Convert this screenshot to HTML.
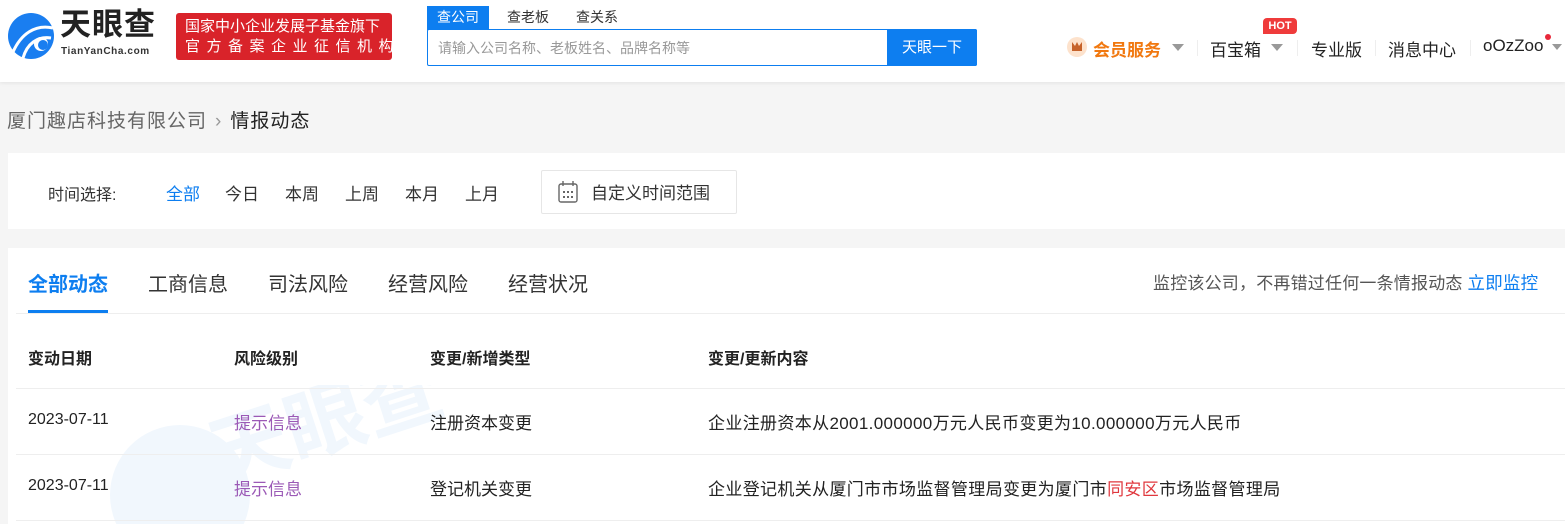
<!DOCTYPE html>
<html><head><meta charset="utf-8"><style>
*{margin:0;padding:0;box-sizing:border-box}
html,body{width:1565px;height:524px;overflow:hidden}
body{background:#f5f5f5;font-family:"Liberation Sans","Noto Sans CJK SC",sans-serif;color:#333;position:relative}
.a{position:absolute;white-space:nowrap}
</style></head><body>
<div class="a" style="left:0;top:0;width:1565px;height:82px;background:#fff;box-shadow:0 1px 4px rgba(0,0,0,.08)"></div>
<svg class="a" style="left:7px;top:12px" width="48" height="48" viewBox="0 0 48 48">
<circle cx="24" cy="24" r="23" fill="#1a7ef0"/>
<path d="M6 40 C14 22 28 12 46 16" stroke="#fff" stroke-width="3" fill="none"/>
<path d="M16 46 C20 32 30 24 44 26" stroke="#fff" stroke-width="3" fill="none"/>
<circle cx="34" cy="32" r="7" fill="#fff"/><circle cx="36" cy="33" r="5" fill="#1a7ef0"/>
</svg>
<div class="a" style="left:60px;top:5px;font-size:31px;line-height:40px;font-weight:bold;color:#222;letter-spacing:1px">天眼查</div>
<div class="a" style="left:61px;top:46px;font-size:10px;line-height:12px;color:#333;font-weight:bold;letter-spacing:0.6px">TianYanCha.com</div>
<div class="a" style="left:176px;top:13px;width:216px;height:47px;background:#d9232a;border-radius:3px;color:#fff;font-size:15px;line-height:20px;padding:4px 0 0 9px">国家中小企业发展子基金旗下<br><span style="letter-spacing:6.5px">官方备案企业征信机构</span></div>
<div class="a" style="left:427px;top:6px;width:62px;height:24px;background:#0d7ef0;color:#fff;font-size:14px;line-height:22px;text-align:center">查公司</div>
<div class="a" style="left:507px;top:7px;font-size:14px;color:#333">查老板</div>
<div class="a" style="left:576px;top:7px;font-size:14px;color:#333">查关系</div>
<div class="a" style="left:427px;top:29px;width:550px;height:37px;border:1px solid #0d7ef0;border-radius:2px;background:#fff"></div>
<div class="a" style="left:438px;top:38px;font-size:14px;color:#999">请输入公司名称、老板姓名、品牌名称等</div>
<div class="a" style="left:887px;top:29px;width:90px;height:37px;background:#0d7ef0;color:#fff;font-size:15px;line-height:37px;text-align:center;border-radius:0 2px 2px 0">天眼一下</div>
<div class="a" style="left:1067px;top:37px;width:20px;height:20px;border-radius:50%;background:#fde2cc"></div>
<div class="a" style="left:1072px;top:42px;width:10px;height:9px;background:#c6622a;clip-path:polygon(0 0,30% 45%,50% 0,70% 45%,100% 0,100% 100%,0 100%)"></div>
<div class="a" style="left:1093px;top:36px;font-size:17px;font-weight:bold;color:#f1780f">会员服务</div>
<div class="a" style="left:1172px;top:44px;border:6px solid transparent;border-top:7px solid #999;border-bottom:0"></div>
<div class="a" style="left:1210px;top:36px;font-size:17px;color:#222">百宝箱</div>
<div class="a" style="left:1271px;top:44px;border:6px solid transparent;border-top:7px solid #999;border-bottom:0"></div>
<div class="a" style="left:1263px;top:18px;width:34px;height:16px;background:#ef3b3b;color:#fff;font-size:11px;font-weight:bold;line-height:16px;text-align:center;border-radius:4px 4px 4px 0">HOT</div>
<div class="a" style="left:1311px;top:36px;font-size:17px;color:#222">专业版</div>
<div class="a" style="left:1388px;top:36px;font-size:17px;color:#222">消息中心</div>
<div class="a" style="left:1483px;top:36px;font-size:17px;color:#222">oOzZoo</div>
<div class="a" style="left:1545px;top:34px;width:6px;height:6px;border-radius:50%;background:#e8283a"></div>
<div class="a" style="left:1552px;top:44px;border:5px solid transparent;border-top:6px solid #999;border-bottom:0"></div>
<div class="a" style="left:1197px;top:40px;width:1px;height:16px;background:#eee"></div>
<div class="a" style="left:1297px;top:40px;width:1px;height:16px;background:#eee"></div>
<div class="a" style="left:1375px;top:40px;width:1px;height:16px;background:#eee"></div>
<div class="a" style="left:1470px;top:40px;width:1px;height:16px;background:#eee"></div>

<div class="a" style="left:7px;top:106px;font-size:19px;letter-spacing:1px;color:#666">厦门趣店科技有限公司<span style="color:#999;margin:0 8px">›</span><span style="color:#222">情报动态</span></div>

<div class="a" style="left:8px;top:153px;width:1557px;height:76px;background:#fff"></div>
<div class="a" style="left:48px;top:181px;font-size:16px;color:#333">时间选择:</div>
<div class="a" style="left:166px;top:180px;font-size:17px;color:#0d7ef0">全部</div>
<div class="a" style="left:225px;top:180px;font-size:17px;color:#333">今日</div>
<div class="a" style="left:285px;top:180px;font-size:17px;color:#333">本周</div>
<div class="a" style="left:345px;top:180px;font-size:17px;color:#333">上周</div>
<div class="a" style="left:405px;top:180px;font-size:17px;color:#333">本月</div>
<div class="a" style="left:465px;top:180px;font-size:17px;color:#333">上月</div>
<div class="a" style="left:541px;top:170px;width:196px;height:44px;border:1px solid #e6e6e6;border-radius:2px"></div>
<svg class="a" style="left:557px;top:180px" width="22" height="24" viewBox="0 0 22 24"><rect x="2" y="4" width="18" height="18" rx="2" fill="none" stroke="#666" stroke-width="1.4"/><path d="M6 1v5M16 1v5" stroke="#666" stroke-width="1.4"/><g fill="#666"><rect x="6" y="11" width="2" height="2"/><rect x="10" y="11" width="2" height="2"/><rect x="14" y="11" width="2" height="2"/><rect x="6" y="16" width="2" height="2"/><rect x="10" y="16" width="2" height="2"/><rect x="14" y="16" width="2" height="2"/></g></svg>
<div class="a" style="left:591px;top:179px;font-size:17px;color:#333">自定义时间范围</div>

<div class="a" style="left:8px;top:248px;width:1557px;height:276px;background:#fff"></div>
<svg class="a" style="left:110px;top:385px" width="380" height="139" viewBox="0 0 380 139"><circle cx="70" cy="110" r="70" fill="#f1f7fd"/><text x="110" y="100" font-size="80" font-weight="bold" fill="#f1f7fd" transform="rotate(-18 110 100)" font-family="Noto Sans CJK SC">天眼查</text></svg>
<div class="a" style="left:28px;top:268px;font-size:20px;font-weight:bold;color:#0d7ef0">全部动态</div>
<div class="a" style="left:148px;top:268px;font-size:20px;color:#333">工商信息</div>
<div class="a" style="left:268px;top:268px;font-size:20px;color:#333">司法风险</div>
<div class="a" style="left:388px;top:268px;font-size:20px;color:#333">经营风险</div>
<div class="a" style="left:508px;top:268px;font-size:20px;color:#333">经营状况</div>
<div class="a" style="left:28px;top:310px;width:80px;height:3px;background:#0d7ef0"></div>
<div class="a" style="left:16px;top:313px;width:1549px;height:1px;background:#eee"></div>
<div class="a" style="left:1153px;top:269px;font-size:17px;letter-spacing:0.2px;color:#555">监控该公司，不再错过任何一条情报动态 <span style="color:#0d7ef0;font-size:17.5px">立即监控</span></div>

<div class="a" style="left:28px;top:345px;font-size:16px;font-weight:bold;color:#222">变动日期</div>
<div class="a" style="left:234px;top:345px;font-size:16px;font-weight:bold;color:#222">风险级别</div>
<div class="a" style="left:430px;top:345px;font-size:16px;font-weight:bold;color:#222">变更/新增类型</div>
<div class="a" style="left:708px;top:345px;font-size:16px;font-weight:bold;color:#222">变更/更新内容</div>
<div class="a" style="left:16px;top:388px;width:1549px;height:1px;background:#eee"></div>
<div class="a" style="left:28px;top:411px;font-size:16px;color:#222">2023-07-11</div>
<div class="a" style="left:234px;top:409px;font-size:17px;color:#9b59b6">提示信息</div>
<div class="a" style="left:430px;top:409px;font-size:17px;color:#222">注册资本变更</div>
<div class="a" style="left:708px;top:409px;font-size:17px;letter-spacing:0.35px;color:#222">企业注册资本从2001.000000万元人民币变更为10.000000万元人民币</div>
<div class="a" style="left:16px;top:454px;width:1549px;height:1px;background:#eee"></div>
<div class="a" style="left:28px;top:477px;font-size:16px;color:#222">2023-07-11</div>
<div class="a" style="left:234px;top:475px;font-size:17px;color:#9b59b6">提示信息</div>
<div class="a" style="left:430px;top:475px;font-size:17px;color:#222">登记机关变更</div>
<div class="a" style="left:708px;top:475px;font-size:17px;letter-spacing:0.35px;color:#222">企业登记机关从厦门市市场监督管理局变更为厦门市<span style="color:#e0383e">同安区</span>市场监督管理局</div>
<div class="a" style="left:16px;top:520px;width:1549px;height:1px;background:#eee"></div>
</body></html>
